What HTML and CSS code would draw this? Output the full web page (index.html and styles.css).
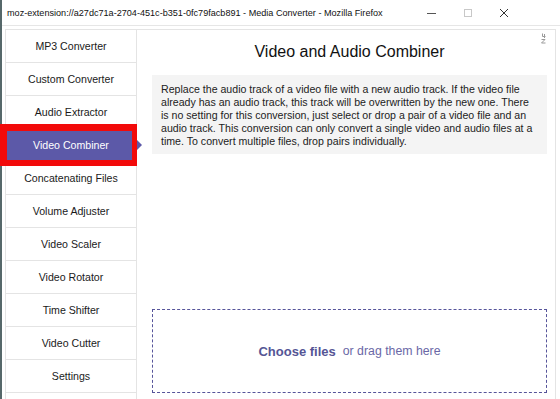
FILE: index.html
```html
<!DOCTYPE html>
<html>
<head>
<meta charset="utf-8">
<link rel="stylesheet" href="styles.css">
</head>
<body>
<div class="window">
  <div class="titlebar">
    <span class="title">moz-extension://a27dc71a-2704-451c-b351-0fc79facb891 - Media Converter - Mozilla Firefox</span>
    <div class="controls">
      <span class="ctl"><svg width="10" height="10" viewBox="0 0 10 10"><path d="M0 5.5H9" stroke="#555" stroke-width="1"/></svg></span>
      <span class="ctl"><svg width="10" height="10" viewBox="0 0 10 10"><rect x="1.5" y="1.5" width="7" height="7" fill="none" stroke="#c8c8c8" stroke-width="1"/></svg></span>
      <span class="ctl"><svg width="10" height="10" viewBox="0 0 10 10"><path d="M1 1L9 9M9 1L1 9" stroke="#333" stroke-width="1"/></svg></span>
    </div>
  </div>
  <div class="app">
    <nav class="sidebar">
      <div class="item">MP3 Converter</div>
      <div class="item">Custom Converter</div>
      <div class="item">Audio Extractor</div>
      <div class="item active">Video Combiner</div>
      <div class="item">Concatenating Files</div>
      <div class="item">Volume Adjuster</div>
      <div class="item">Video Scaler</div>
      <div class="item">Video Rotator</div>
      <div class="item">Time Shifter</div>
      <div class="item">Video Cutter</div>
      <div class="item">Settings</div>
    </nav>
    <main class="main">
      <svg class="corner-icon" width="7" height="11" viewBox="0 0 7 11"><path d="M2.5 0.5V3.5H5.5M4.5 1V5" stroke="#9a9a9a" stroke-width="1" fill="none"/><path d="M1.5 6.5H5L1.5 10H5.5" stroke="#9a9a9a" stroke-width="1" fill="none"/></svg>
      <h1 class="heading">Video and Audio Combiner</h1>
      <p class="desc">Replace the audio track of a video file with a new audio track. If the video file already has an audio track, this track will be overwritten by the new one. There is no setting for this conversion, just select or drop a pair of a video file and an audio track. This conversion can only convert a single video and audio files at a time. To convert multiple files, drop pairs individually.</p>
      <div class="dropzone">
        <span class="choose">Choose files</span><span class="drag">or drag them here</span>
      </div>
    </main>
  </div>
</div>
<div class="highlight"></div>
</body>
</html>
```

FILE: styles.css
```css
html, body {
  margin: 0;
  padding: 0;
  background: #ffffff;
}
body {
  width: 560px;
  height: 399px;
  overflow: hidden;
  position: relative;
  font-family: "Liberation Sans", Arial, sans-serif;
  color: #222;
}
.window {
  height: 399px;
  border-left: 2px solid #56686a;
  box-sizing: border-box;
  display: flex;
  flex-direction: column;
}
.titlebar {
  height: 25px;
  border-bottom: 1px solid #e6e6e6;
  display: flex;
  align-items: center;
  padding-left: 5px;
  flex-shrink: 0;
}
.title {
  flex: 1;
  font-size: 9.1px;
  color: #111;
  white-space: nowrap;
}
.controls {
  display: flex;
  margin-right: 38px;
}
.ctl {
  width: 36px;
  height: 25px;
  display: flex;
  align-items: center;
  justify-content: center;
}
.app {
  flex: 1;
  display: flex;
  margin: 3px 4px 0 3px;
  border-top: 1px solid #e4e4e4;
  border-right: 1px solid #e4e4e4;
  min-height: 0;
}
.sidebar {
  width: 132px;
  box-sizing: border-box;
  border-left: 1px solid #e4e4e4;
  border-right: 1px solid #e4e4e4;
  flex-shrink: 0;
}
.item {
  height: 32px;
  line-height: 33px;
  border-bottom: 1px solid #e4e4e4;
  text-align: center;
  font-size: 10.6px;
  color: #1a1a1a;
  position: relative;
}
.item.active {
  background: #5c59a8;
  color: #ffffff;
}
.item.active::after {
  content: "";
  position: absolute;
  left: calc(100% + 1px);
  top: 11px;
  border-left: 5px solid #5c59a8;
  border-top: 5px solid transparent;
  border-bottom: 5px solid transparent;
}
.main {
  flex: 1;
  position: relative;
  display: flex;
  flex-direction: column;
  padding: 0 8px 6px 15px;
}
.corner-icon {
  position: absolute;
  top: 3px;
  right: 8px;
}
.heading {
  margin: 12px 0 0 0;
  font-size: 16px;
  line-height: 20px;
  font-weight: normal;
  text-align: center;
  color: #111;
}
.desc {
  margin: 13px 0 0 0;
  background: #f4f4f4;
  padding: 8px 12px 6px 9px;
  font-size: 10.6px;
  line-height: 12.9px;
  color: #222;
}
.dropzone {
  margin-top: auto;
  height: 82px;
  border: 1px dashed #56549a;
  display: flex;
  align-items: center;
  justify-content: center;
  font-size: 13px;
}
.choose {
  font-weight: bold;
  color: #555595;
}
.drag {
  margin-left: 7px;
  color: #6a68a6;
  font-size: 12.3px;
}
.highlight {
  position: absolute;
  left: 0;
  top: 124px;
  width: 137px;
  height: 42px;
  box-sizing: border-box;
  border-style: solid;
  border-color: #f20a0a;
  border-width: 7px 5px 6px 7px;
}
```
